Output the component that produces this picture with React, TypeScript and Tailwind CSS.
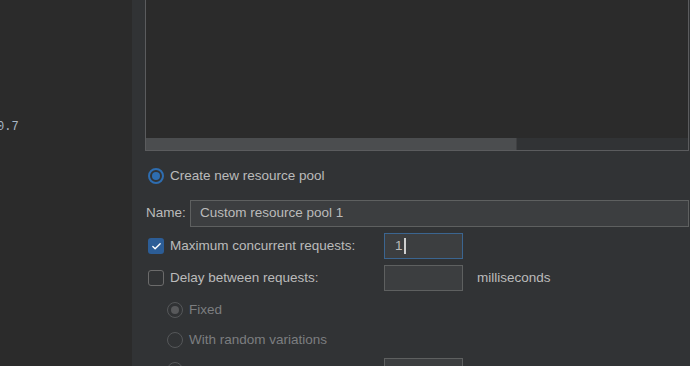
import { Check } from "lucide-react";

function Radio({ on, disabled }: { on?: boolean; disabled?: boolean }) {
  if (disabled) {
    return (
      <span className="flex h-[16px] w-[16px] shrink-0 items-center justify-center rounded-full border border-[#555759]">
        {on && <span className="h-[8px] w-[8px] rounded-full bg-[#58595b]" />}
      </span>
    );
  }
  return (
    <span className="flex h-[16px] w-[16px] shrink-0 items-center justify-center rounded-full border-2 border-[#2e6db0]">
      {on && <span className="h-[8px] w-[8px] rounded-full bg-[#2e6db0]" />}
    </span>
  );
}

function Checkbox({ on }: { on?: boolean }) {
  return on ? (
    <span className="flex h-[16px] w-[16px] shrink-0 items-center justify-center rounded-[3px] bg-[#2c5d96]">
      <Check size={11} strokeWidth={3} className="text-white" />
    </span>
  ) : (
    <span className="h-[16px] w-[16px] shrink-0 rounded-[3px] border border-[#6b6b6b]" />
  );
}

export default function App() {
  return (
    <div
      className="flex h-[366px] w-[690px] overflow-hidden text-[13.5px] text-[#bbbbbb]"
      style={{ fontFamily: '"Liberation Sans", Arial, sans-serif' }}
    >
      {/* left editor strip */}
      <div className="w-[132px] shrink-0 bg-[#2b2b2b] pt-[116px]">
        <span
          className="ml-[-3px] text-[12px] text-[#a9b7c6]"
          style={{ fontFamily: '"Liberation Mono", monospace' }}
        >
          0.7
        </span>
      </div>

      {/* settings pane */}
      <div className="flex flex-1 flex-col bg-[#313335] pl-[13px] pr-[1px]">
        <div className="mt-[-1px] flex h-[152px] shrink-0 flex-col border border-[#5b5c5e] bg-[#2b2b2b]">
          <div className="flex-1" />
          <div className="flex h-[12px] shrink-0 bg-[#313335]">
            <div className="w-[371px] border-r border-[#3f4042] bg-[#4b4d4f]" />
          </div>
        </div>

        <div className="mt-[15px] flex h-[20px] shrink-0 items-center gap-[6px] pl-[3px]">
          <Radio on />
          <span>Create new resource pool</span>
        </div>

        <div className="mt-[14px] flex h-[27px] shrink-0 items-center">
          <span className="w-[45px] pl-[1px]">Name:</span>
          <div className="flex h-[27px] flex-1 items-center border border-[#5e6060] bg-[#3c3e40] pl-[9px]">
            Custom resource pool 1
          </div>
        </div>

        <div className="mt-[6px] flex h-[26px] shrink-0 items-center">
          <div className="flex w-[239px] items-center gap-[6px] pl-[3px]">
            <Checkbox on />
            <span>Maximum concurrent requests:</span>
          </div>
          <div className="flex h-[26px] w-[79px] items-center border border-[#3b6590] bg-[#3c3e40] pl-[10px]">
            <span>1</span>
            <span className="ml-[1px] h-[16px] w-[2px] bg-[#cfcfcf]" />
          </div>
        </div>

        <div className="mt-[6px] flex h-[26px] shrink-0 items-center">
          <div className="flex w-[239px] items-center gap-[6px] pl-[3px]">
            <Checkbox />
            <span>Delay between requests:</span>
          </div>
          <div className="h-[26px] w-[79px] border border-[#5e6060] bg-[#3c3e40]" />
          <span className="ml-[14px]">milliseconds</span>
        </div>

        <div className="mt-[6px] flex h-[26px] shrink-0 items-center gap-[6px] pl-[22px] text-[#7c7e80]">
          <Radio on disabled />
          <span>Fixed</span>
        </div>

        <div className="mt-[4px] flex h-[26px] shrink-0 items-center gap-[6px] pl-[22px] text-[#7c7e80]">
          <Radio disabled />
          <span>With random variations</span>
        </div>

        <div className="mt-[4px] flex h-[26px] shrink-0 items-start">
          <div className="flex w-[239px] items-center gap-[6px] pl-[22px] pt-[5px]">
            <Radio disabled />
          </div>
          <div className="mt-[1px] h-[26px] w-[79px] border border-[#5e6060] bg-[#3c3e40]" />
        </div>
      </div>
    </div>
  );
}
